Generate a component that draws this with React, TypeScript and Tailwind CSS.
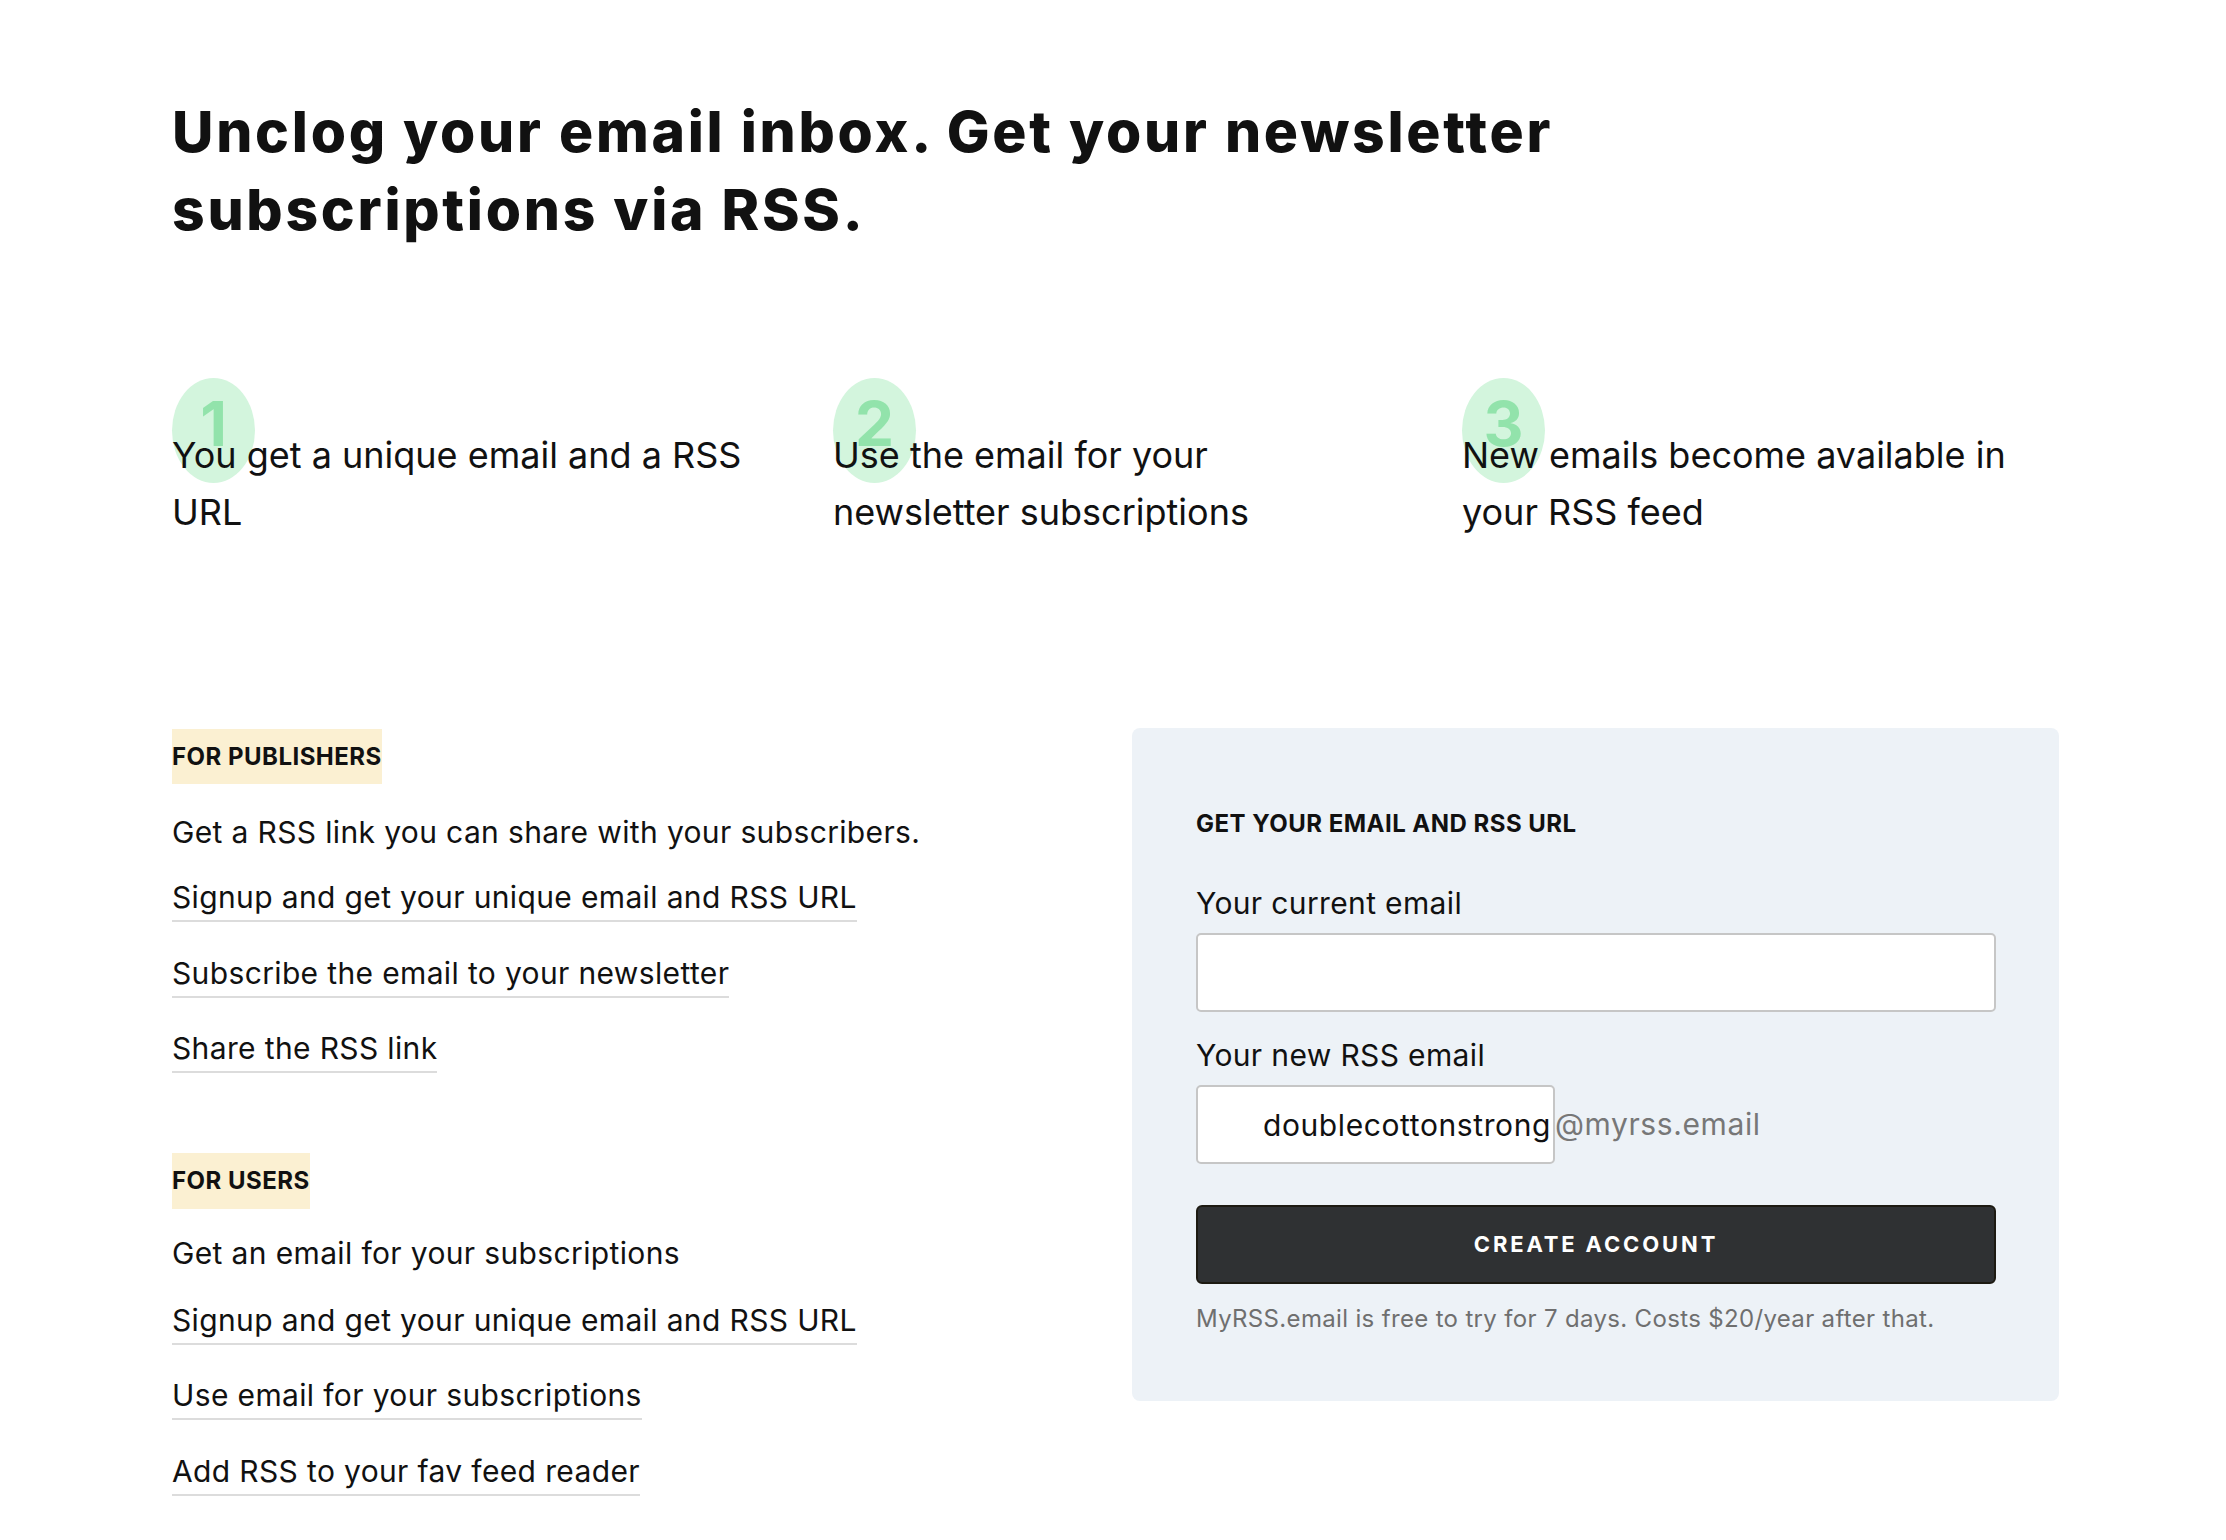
import React from "react";

const font = { fontFamily: "Inter, 'Noto Sans', sans-serif" };

function Step({ n, lines }: { n: string; lines: string[] }) {
  return (
    <div className="relative pt-[49px]">
      <div className="absolute left-0 top-0 w-[83px] h-[105px] rounded-[50%] bg-[#d3f5dd] flex justify-center pt-[15px]">
        <span className="text-[62px] leading-none font-bold text-[#92e3ab]">{n}</span>
      </div>
      <p className="relative text-[36px] leading-[57px] text-[#111]">
        {lines.map((l, i) => (
          <span key={i} className="block">
            {l}
          </span>
        ))}
      </p>
    </div>
  );
}

function LinkItem({ children, mt }: { children: React.ReactNode; mt: string }) {
  return (
    <div className={mt}>
      <a className="inline-block text-[30px] leading-[40px] tracking-[0.012em] pb-[3px] border-b-2 border-[#dcdcdc] text-[#111]">
        {children}
      </a>
    </div>
  );
}

export default function App() {
  return (
    <div className="bg-white min-h-[1540px] pl-[172px] pr-[167px] pt-[93px] pb-[40px]" style={font}>
      <h1 className="text-[57px] leading-[78px] font-extrabold text-[#111] tracking-[0.048em]">
        Unclog your email inbox. Get your newsletter
        <br />
        subscriptions via RSS.
      </h1>

      <div className="mt-[129px] grid grid-cols-[661px_629px_1fr]">
        <Step n="1" lines={["You get a unique email and a RSS", "URL"]} />
        <Step n="2" lines={["Use the email for your", "newsletter subscriptions"]} />
        <Step n="3" lines={["New emails become available in", "your RSS feed"]} />
      </div>

      <div className="mt-[188px] grid grid-cols-[1fr_927px] items-start">
        <div className="text-[#111]">
          <div>
            <span className="inline-block h-[55px] leading-[55px] bg-[#fbf0d2] text-[24px] font-bold tracking-[0.02em]">
              FOR PUBLISHERS
            </span>
          </div>
          <p className="mt-[28px] text-[30px] leading-[40px] tracking-[0.012em]">
            Get a RSS link you can share with your subscribers.
          </p>
          <LinkItem mt="mt-[25px]">Signup and get your unique email and RSS URL</LinkItem>
          <LinkItem mt="mt-[31px]">Subscribe the email to your newsletter</LinkItem>
          <LinkItem mt="mt-[30px]">Share the RSS link</LinkItem>

          <div className="mt-[80px]">
            <span className="inline-block h-[56px] leading-[56px] bg-[#fbf0d2] text-[24px] font-bold tracking-[0.02em]">
              FOR USERS
            </span>
          </div>
          <p className="mt-[24px] text-[30px] leading-[40px] tracking-[0.012em]">Get an email for your subscriptions</p>
          <LinkItem mt="mt-[27px]">Signup and get your unique email and RSS URL</LinkItem>
          <LinkItem mt="mt-[30px]">Use email for your subscriptions</LinkItem>
          <LinkItem mt="mt-[31px]">Add RSS to your fav feed reader</LinkItem>
        </div>

        <div className="-mt-px bg-[#edf2f7] rounded-lg h-[673px] pl-[64px] pr-[63px] pt-[80px]">
          <h2 className="text-[24px] leading-[32px] font-bold text-[#111] tracking-[0.02em]">
            GET YOUR EMAIL AND RSS URL
          </h2>
          <label className="block mt-[43px] text-[30px] leading-[40px] tracking-[0.012em] text-[#111]">
            Your current email
          </label>
          <input
            type="email"
            className="block mt-[10px] w-full h-[79px] bg-white border-2 border-[#c6c6c6] rounded-[5px] px-4 text-[30px] outline-none"
          />
          <label className="block mt-[23px] text-[30px] leading-[40px] tracking-[0.012em] text-[#111]">
            Your new RSS email
          </label>
          <div className="mt-[10px] flex items-center">
            <input
              type="text"
              readOnly
              value="doublecottonstrong"
              className="w-[359px] h-[79px] bg-white border-2 border-[#c6c6c6] rounded-[5px] pr-[2px] text-right text-[30px] tracking-[0.02em] text-[#111] outline-none"
            />
            <span className="text-[30px] tracking-[0.02em] text-[#777]">@myrss.email</span>
          </div>
          <button className="mt-[41px] w-full h-[79px] bg-[#2f3133] border-2 border-[#1d1a12] rounded-[6px] text-white text-[22px] font-bold tracking-[0.13em]">
            CREATE ACCOUNT
          </button>
          <p className="mt-[19px] text-[24px] leading-[32px] tracking-[0.014em] text-[#6f6f6f]">
            MyRSS.email is free to try for 7 days. Costs $20/year after that.
          </p>
        </div>
      </div>
    </div>
  );
}
